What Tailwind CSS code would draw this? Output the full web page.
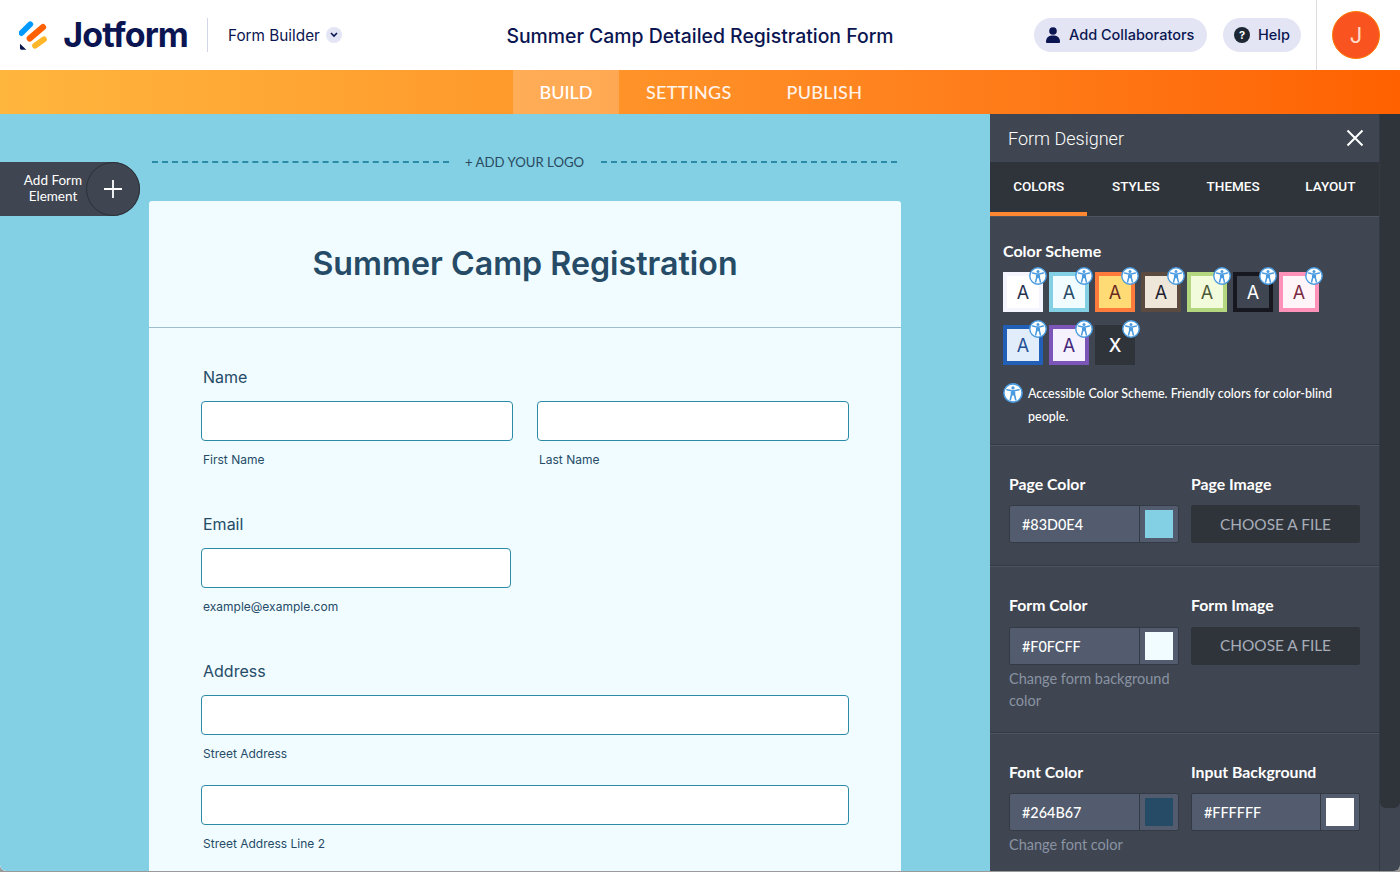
<!doctype html>
<html>
<head>
<meta charset="utf-8">
<script src="https://cdn.jsdelivr.net/npm/@tailwindcss/browser@4"></script>
</head>
<body class="bg-[#9a9a9a] overflow-hidden">
<svg class="hidden" width="0" height="0"><defs>
<symbol id="acc" viewBox="0 0 18 18">
<circle cx="9" cy="9" r="8.2" fill="#fff" stroke="#4a9be0" stroke-width="1.4"/>
<circle cx="9" cy="4.4" r="1.5" fill="#4a9be0"/>
<path d="M3.6 6.1 L9 7.2 L14.4 6.1 M7.7 7.2 V10.4 L6.6 15 M10.3 7.2 V10.4 L11.4 15 M7.7 10.4 H10.3" fill="none" stroke="#4a9be0" stroke-width="1.5" stroke-linecap="round"/>
<path d="M7.7 7 h2.6 v3.6 h-2.6z" fill="#4a9be0"/>
</symbol>
</defs></svg>
<div class="w-[1400px] h-[871px] overflow-hidden flex flex-col bg-white rounded-b-md font-['Inter',sans-serif]">
  <!-- header -->
  <header class="h-[70px] shrink-0 flex items-center bg-white relative">
    <div class="w-[169px] ml-[19px] flex items-center gap-[16px] shrink-0">
      <svg width="29" height="30" viewBox="0 0 29 30">
        <path d="M2.5 13 L11.5 4" stroke="#0099ff" stroke-width="6" stroke-linecap="round"/>
        <path d="M11 17.5 L24.5 6" stroke="#ff6100" stroke-width="6.4" stroke-linecap="round" transform="translate(0,1)"/>
        <path d="M16.5 26 L25.5 19.5" stroke="#ffb629" stroke-width="6" stroke-linecap="round"/>
        <path d="M1 24 L7.5 30 H2.3 A1.5 1.5 0 0 1 1 28.5 Z" fill="#0a1551"/>
      </svg>
      <span class="text-[34px] leading-none font-bold tracking-[-0.026em] text-[#0a1551]">Jotform</span>
    </div>
    <div class="w-px h-[34px] bg-[#d3d6e8] ml-[19px]"></div>
    <span class="ml-[20px] mt-[2px] text-[15.3px] text-[#0a1551] font-normal">Form Builder</span>
    <span class="ml-[6px] w-4 h-4 rounded-full bg-[#e3e5f5] flex items-center justify-center">
      <svg width="8" height="6" viewBox="0 0 8 6"><path d="M1 1 L4 4 L7 1" fill="none" stroke="#0a1551" stroke-width="1.6"/></svg>
    </span>
    <div class="absolute left-0 w-[1400px] top-0 h-[70px] flex items-center justify-center pointer-events-none">
      <span class="text-[19.4px] font-medium text-[#0a1551] mt-[3px]">Summer Camp Detailed Registration Form</span>
    </div>
    <div class="ml-auto flex items-center h-full">
      <div class="h-[34px] w-[173px] rounded-full bg-[#e3e5f5] flex items-center pl-[12px] gap-[9px]">
        <svg width="14" height="16" viewBox="0 0 14 16"><circle cx="7" cy="4" r="3.8" fill="#0a1551"/><path d="M0 15 C0 10 3 8.5 7 8.5 C11 8.5 14 10 14 15 Q14 16 13 16 H1 Q0 16 0 15Z" fill="#0a1551"/></svg>
        <span class="text-[14.5px] font-medium text-[#0a1551] -mt-[1px]">Add Collaborators</span>
      </div>
      <div class="ml-4 h-[34px] w-[78px] rounded-full bg-[#e3e5f5] flex items-center pl-[11px] gap-[8px]">
        <span class="w-4 h-4 rounded-full bg-[#1d2733] text-white text-[11px] font-bold flex items-center justify-center leading-none">?</span>
        <span class="text-[14.5px] font-medium text-[#0a1551] -mt-[1px]">Help</span>
      </div>
      <div class="ml-[15px] w-[84px] h-full border-l border-[#dddddd] flex items-center pl-[15px]">
        <span class="w-12 h-12 rounded-full bg-[#f95420] border border-[#ff7a00] text-[#ffdccc] text-[22px] flex items-center justify-center">J</span>
      </div>
    </div>
  </header>
  <!-- nav -->
  <nav class="h-[44px] shrink-0 bg-gradient-to-r from-[#ffb63d] to-[#ff6100] flex text-white/90 text-[18px] tracking-[0.015em] font-medium font-['Lato',sans-serif]">
    <div class="ml-[513px] w-[106px] bg-white/20 flex items-center justify-center text-white tracking-normal">BUILD</div>
    <div class="ml-[27px] flex items-center">SETTINGS</div>
    <div class="ml-[55px] flex items-center">PUBLISH</div>
  </nav>
  <div class="flex-1 min-h-0 flex">
    <!-- canvas -->
    <main class="w-[990px] shrink-0 bg-[#83d0e4] relative overflow-hidden rounded-bl-md">
      <div class="absolute left-0 top-[48px] h-[54px] w-[140px] rounded-r-full bg-[#3f4651] flex items-center text-white">
        <div class="w-[106px] text-center text-[13.5px] leading-[16px] -mt-[2px] font-['Lato',sans-serif]">Add Form<br>Element</div>
        <div class="absolute left-[86px] top-0 w-[54px] h-[54px] rounded-full border border-[#2b3038] flex items-center justify-center">
          <svg width="18" height="18" viewBox="0 0 18 18"><path d="M9 0V18M0 9H18" stroke="#fff" stroke-width="1.8"/></svg>
        </div>
      </div>
      <div class="ml-[152px] w-[745px] mt-[40px] h-[16px] flex items-center text-[#2a4a60] text-[13.2px]">
        <div class="w-[297px] border-t-2 border-dashed border-[#2b8aa6]"></div>
        <span class="ml-[16px] mr-[17px] mt-[2px] whitespace-nowrap font-['Lato',sans-serif]">+ ADD YOUR LOGO</span>
        <div class="flex-1 border-t-2 border-dashed border-[#2b8aa6]"></div>
      </div>
      <div class="ml-[149px] w-[752px] mt-[31px] bg-[#f0fcff] rounded-t-[3px] text-[#264b67] pb-10">
        <div class="h-[127px] border-b border-[#9dbfcc] flex items-center justify-center">
          <h1 class="text-[32.2px] font-semibold leading-none">Summer Camp Registration</h1>
        </div>
        <div class="px-[52px] pt-[39px]">
          <div class="pl-[2px] text-[16px] leading-[20px]">Name</div>
          <div class="mt-[14px] flex gap-6">
            <div class="w-[312px]"><div class="h-10 bg-white border border-[#2b8aa6] rounded-[4px]"></div><div class="pl-[2px] mt-[11px] text-[12px] leading-[16px]">First Name</div></div>
            <div class="w-[312px]"><div class="h-10 bg-white border border-[#2b8aa6] rounded-[4px]"></div><div class="pl-[2px] mt-[11px] text-[12px] leading-[16px]">Last Name</div></div>
          </div>
          <div class="mt-[46px] pl-[2px] text-[16px] leading-[20px]">Email</div>
          <div class="mt-[14px] w-[310px] h-10 bg-white border border-[#2b8aa6] rounded-[4px]"></div>
          <div class="pl-[2px] mt-[11px] text-[12px] leading-[16px]">example@example.com</div>
          <div class="mt-[46px] pl-[2px] text-[16px] leading-[20px]">Address</div>
          <div class="mt-[14px] w-[648px] h-10 bg-white border border-[#2b8aa6] rounded-[4px]"></div>
          <div class="pl-[2px] mt-[11px] text-[12px] leading-[16px]">Street Address</div>
          <div class="mt-[23px] w-[648px] h-10 bg-white border border-[#2b8aa6] rounded-[4px]"></div>
          <div class="pl-[2px] mt-[11px] text-[12px] leading-[16px]">Street Address Line 2</div>
        </div>
      </div>
    </main>
    <!-- panel -->
    <aside class="w-[410px] shrink-0 flex bg-[#3f4651] text-white font-['Lato',sans-serif]">
      <div class="w-[389px] shrink-0 overflow-hidden">
        <div class="h-[48px] flex items-center justify-between pl-[18px] pr-[15px]">
          <span class="text-[18px] font-['Roboto',sans-serif] font-light">Form Designer</span>
          <svg width="18" height="18" viewBox="0 0 18 18"><path d="M1.5 1.5 L16.5 16.5 M16.5 1.5 L1.5 16.5" stroke="#fff" stroke-width="2"/></svg>
        </div>
        <div class="h-[54px] bg-[#2f343b] grid grid-cols-4 text-[13.5px] font-medium font-['Roboto',sans-serif]">
          <div class="flex items-center justify-center border-b-4 border-[#ff8731] pb-[2px]">COLORS</div>
          <div class="flex items-center justify-center pb-[6px]">STYLES</div>
          <div class="flex items-center justify-center pb-[6px]">THEMES</div>
          <div class="flex items-center justify-center pb-[6px]">LAYOUT</div>
        </div>
        <section class="h-[229px] border-y border-t-[#4d5562] border-b-[#343a43] pl-[13px] pt-[25px]">
          <div class="text-[16px] font-bold leading-[18px]">Color Scheme</div>
          <div class="mt-[12px] flex flex-wrap w-[360px] gap-x-[6px] gap-y-[13px]">
            <div class="relative w-10 h-10 border-4 border-[#f5f5ff] bg-white text-[#263250] flex items-center justify-center text-[18px] font-['Inter']">A<svg class="absolute -top-[9px] -right-[8px] w-[18px] h-[18px]"><use href="#acc"/></svg></div>
            <div class="relative w-10 h-10 border-4 border-[#83d0e4] bg-[#f0fcff] text-[#264b67] flex items-center justify-center text-[18px] font-['Inter']">A<svg class="absolute -top-[9px] -right-[8px] w-[18px] h-[18px]"><use href="#acc"/></svg></div>
            <div class="relative w-10 h-10 border-4 border-[#ff7b3c] bg-[#ffdb75] text-[#6b2a22] flex items-center justify-center text-[18px] font-['Inter']">A<svg class="absolute -top-[9px] -right-[8px] w-[18px] h-[18px]"><use href="#acc"/></svg></div>
            <div class="relative w-10 h-10 border-4 border-[#5b4a3f] bg-[#eee6d8] text-[#1d2030] flex items-center justify-center text-[18px] font-['Inter']">A<svg class="absolute -top-[9px] -right-[8px] w-[18px] h-[18px]"><use href="#acc"/></svg></div>
            <div class="relative w-10 h-10 border-4 border-[#b4d67e] bg-[#f2fbdc] text-[#4c5a35] flex items-center justify-center text-[18px] font-['Inter']">A<svg class="absolute -top-[9px] -right-[8px] w-[18px] h-[18px]"><use href="#acc"/></svg></div>
            <div class="relative w-10 h-10 border-4 border-[#16171f] bg-[#3f4651] text-white flex items-center justify-center text-[18px] font-['Inter']">A<svg class="absolute -top-[9px] -right-[8px] w-[18px] h-[18px]"><use href="#acc"/></svg></div>
            <div class="relative w-10 h-10 border-4 border-[#ff92b8] bg-[#fff5f8] text-[#7a2a44] flex items-center justify-center text-[18px] font-['Inter']">A<svg class="absolute -top-[9px] -right-[8px] w-[18px] h-[18px]"><use href="#acc"/></svg></div>
            <div class="relative w-10 h-10 border-4 border-[#2260b8] bg-[#e2edfb] text-[#234f94] flex items-center justify-center text-[18px] font-['Inter']">A<svg class="absolute -top-[9px] -right-[8px] w-[18px] h-[18px]"><use href="#acc"/></svg></div>
            <div class="relative w-10 h-10 border-4 border-[#7c55b8] bg-[#f5f1fd] text-[#44287a] flex items-center justify-center text-[18px] font-['Inter']">A<svg class="absolute -top-[9px] -right-[8px] w-[18px] h-[18px]"><use href="#acc"/></svg></div>
            <div class="relative w-10 h-10 bg-[#2f343b] text-white flex items-center justify-center text-[18px] font-medium font-['Inter']">X<svg class="absolute -top-[5px] -right-[5px] w-[18px] h-[18px]"><use href="#acc"/></svg></div>
          </div>
          <div class="mt-[18px] flex">
            <svg class="w-5 h-5 shrink-0 mt-[0px]"><use href="#acc"/></svg>
            <p class="ml-[5px] w-[320px] text-[12.5px] leading-[23px] font-medium -mt-px">Accessible Color Scheme. Friendly colors for color-blind people.</p>
          </div>
        </section>
        <section class="h-[121px] border-b border-[#343a43] border-t border-t-[#4d5562] pt-[29px] pl-[19px] grid grid-cols-[170px_169px] gap-x-3 content-start">
          <div class="col-span-1 text-[15.8px] font-bold leading-[18px]">Page Color</div>
          <div class="text-[15.8px] font-bold leading-[18px]">Page Image</div>
          <div class="mt-[12px] h-[38px] bg-[#525c6e] border border-[#343a43] rounded-[2px] flex text-[14.4px] font-medium items-stretch">
            <div class="flex-1 flex items-center pl-[12px] pt-[2px]">#83D0E4</div>
            <div class="w-[39px] border-l border-[#343a43] flex items-center justify-center"><span class="w-7 h-7 bg-[#83d0e4]"></span></div>
          </div>
          <div class="mt-[12px] h-[38px] bg-[#2f343b] rounded-[2px] flex items-center justify-center text-[#a7adb8] text-[15.4px] pt-[2px]">CHOOSE A FILE</div>
        </section>
        <section class="h-[167px] border-b border-[#343a43] border-t border-t-[#4d5562] pt-[29px] pl-[19px] grid grid-cols-[170px_169px] gap-x-3 content-start">
          <div class="text-[15.8px] font-bold leading-[18px]">Form Color</div>
          <div class="text-[15.8px] font-bold leading-[18px]">Form Image</div>
          <div class="mt-[13px] h-[38px] bg-[#525c6e] border border-[#343a43] rounded-[2px] flex text-[14.4px] font-medium">
            <div class="flex-1 flex items-center pl-[12px] pt-[2px]">#F0FCFF</div>
            <div class="w-[39px] border-l border-[#343a43] flex items-center justify-center"><span class="w-7 h-7 bg-[#f0fcff]"></span></div>
          </div>
          <div class="mt-[13px] h-[38px] bg-[#2f343b] rounded-[2px] flex items-center justify-center text-[#a7adb8] text-[15.4px]">CHOOSE A FILE</div>
          <p class="mt-[3px] text-[14.5px] leading-[22px] text-[#8a93a3]">Change form background color</p>
        </section>
        <section class="border-t border-t-[#4d5562] pt-[29px] pl-[19px] grid grid-cols-[170px_169px] gap-x-3 content-start">
          <div class="text-[15.8px] font-bold leading-[18px]">Font Color</div>
          <div class="text-[15.8px] font-bold leading-[18px]">Input Background</div>
          <div class="mt-[12px] h-[38px] bg-[#525c6e] border border-[#343a43] rounded-[2px] flex text-[14.4px] font-medium">
            <div class="flex-1 flex items-center pl-[12px] pt-[2px]">#264B67</div>
            <div class="w-[39px] border-l border-[#343a43] flex items-center justify-center"><span class="w-7 h-7 bg-[#264b67]"></span></div>
          </div>
          <div class="mt-[12px] h-[38px] bg-[#525c6e] border border-[#343a43] rounded-[2px] flex text-[14.4px] font-medium">
            <div class="flex-1 flex items-center pl-[12px] pt-[2px]">#FFFFFF</div>
            <div class="w-[39px] border-l border-[#343a43] flex items-center justify-center"><span class="w-7 h-7 bg-white"></span></div>
          </div>
          <p class="mt-[3px] col-span-2 text-[14.5px] leading-[22px] text-[#8a93a3]">Change font color</p>
        </section>
      </div>
      <div class="flex-1 border-l border-[#343a43] rounded-br-md">
        <div class="h-[694px] bg-[#2f343b] rounded-b-md"></div>
      </div>
    </aside>
  </div>
</div>
</body>
</html>
